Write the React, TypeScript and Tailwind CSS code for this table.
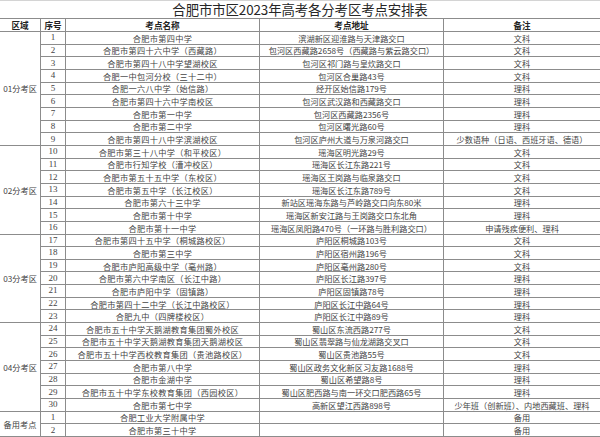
type Row = [string, string, string, string];

type Group = {
  name: string;
  span: string;
  rows: Row[];
};

const groups: Group[] = [
  {
    name: "01分考区",
    span: "row-span-9",
    rows: [
      ["1", "合肥市第四中学", "滨湖新区迎淮路与天津路交口", "文科"],
      ["2", "合肥市第四十六中学（西藏路）", "包河区西藏路2658号（西藏路与紫云路交口）", "文科"],
      ["3", "合肥市第四十八中学望湖校区", "包河区祁门路与皇炊路交口", "文科"],
      ["4", "合肥一中包河分校（三十二中）", "包河区合巢路43号", "文科"],
      ["5", "合肥一六八中学（始信路）", "经开区始信路179号", "理科"],
      ["6", "合肥市第四十六中学南校区", "包河区武汉路和西藏路交口", "理科"],
      ["7", "合肥市第一中学", "包河区西藏路2356号", "理科"],
      ["8", "合肥市第二中学", "包河区曙光路60号", "理科"],
      ["9", "合肥市第四十八中学滨湖校区", "包河区庐州大道与万泉河路交口", "少数语种（日语、西班牙语、德语）"],
    ],
  },
  {
    name: "02分考区",
    span: "row-span-7",
    rows: [
      ["10", "合肥市第三十八中学（和平校区）", "瑶海区明光路29号", "文科"],
      ["11", "合肥市行知学校（漕冲校区）", "瑶海区长江东路221号", "文科"],
      ["12", "合肥市第五十五中学（东校区）", "瑶海区王岗路与临泉路交口", "文科"],
      ["13", "合肥市第五中学（长江校区）", "瑶海区长江东路789号", "文科"],
      ["14", "合肥市第六十三中学", "新站区瑶海东路与芦岭路交口向东80米", "理科"],
      ["15", "合肥市第十中学", "瑶海区新安江路与王岗路交口东北角", "理科"],
      ["16", "合肥市第十一中学", "瑶海区凤阳路470号（一环路与胜利路交口）", "申请残疾便利、理科"],
    ],
  },
  {
    name: "03分考区",
    span: "row-span-7",
    rows: [
      ["17", "合肥市第四十五中学（桐城路校区）", "庐阳区桐城路103号", "文科"],
      ["18", "合肥市第三中学", "庐阳区宿州路196号", "文科"],
      ["19", "合肥市庐阳高级中学（亳州路）", "庐阳区亳州路280号", "文科"],
      ["20", "合肥市第六中学南区（长江中路）", "庐阳区长江路397号", "理科"],
      ["21", "合肥市庐阳中学（固镇路）", "庐阳区固镇路78号", "理科"],
      ["22", "合肥市第四十二中学（长江中路校区）", "庐阳区长江中路64号", "理科"],
      ["23", "合肥九中（四牌楼校区）", "庐阳区长江中路89号", "理科"],
    ],
  },
  {
    name: "04分考区",
    span: "row-span-7",
    rows: [
      ["24", "合肥市五十中学天鹅湖教育集团蜀外校区", "蜀山区东流西路277号", "文科"],
      ["25", "合肥市五十中学天鹅湖教育集团天鹅湖校区", "蜀山区翡翠路与仙龙湖路交叉口", "文科"],
      ["26", "合肥市五十中学西校教育集团（贵池路校区）", "蜀山区贵池路55号", "文科"],
      ["27", "合肥市第八中学", "蜀山区政务文化新区习友路1688号", "理科"],
      ["28", "合肥市金湖中学", "蜀山区希望路8号", "理科"],
      ["29", "合肥市五十中学东校教育集团（西园校区）", "蜀山区肥西路与南一环交口肥西路65号", "理科"],
      ["30", "合肥市第七中学", "高新区望江西路898号", "少年班（创新班）、内地西藏班、理科"],
    ],
  },
  {
    name: "备用考点",
    span: "row-span-2",
    rows: [
      ["1", "合肥工业大学附属中学", "", "备用"],
      ["2", "合肥市第三十中学", "", "备用"],
    ],
  },
];

const cell =
  "flex items-center justify-center overflow-hidden whitespace-nowrap border-b border-[#8c8c8c] leading-none";

export default function App() {
  return (
    <div className="h-[437px] w-[600px] overflow-hidden bg-white font-['Noto_Sans_CJK_SC','Noto_Sans',sans-serif] text-[#444]">
      <div className="flex h-[18px] items-center justify-center border-t border-[#d4d4d4] text-[13.4px] leading-none tracking-[-0.1px] text-[#262626]">
        合肥市市区2023年高考各分考区考点安排表
      </div>

      <div className="grid grid-cols-[40px_25px_194px_184px_157px] grid-rows-[13px_repeat(32,12.66px)] border-t border-[#8c8c8c] text-[8.2px]">
        {/* header */}
        <div className={`${cell} text-[8.6px] font-bold text-[#222]`}>区域</div>
        <div className={`${cell} border-l text-[8.6px] font-bold text-[#222]`}>序号</div>
        <div className={`${cell} border-l text-[8.6px] font-bold text-[#222]`}>考点名称</div>
        <div className={`${cell} border-l text-[8.6px] font-bold text-[#222]`}>考点地址</div>
        <div className={`${cell} border-l text-[8.6px] font-bold text-[#222]`}>备注</div>

        {groups.map((g) => [
          <div key={g.name} className={`${cell} ${g.span}`}>
            {g.name}
          </div>,
          ...g.rows.flatMap((r) => [
            <div key={g.name + r[0] + "n"} className={`${cell} border-l font-['Liberation_Serif',serif] text-[9px]`}>
              {r[0]}
            </div>,
            <div key={g.name + r[0] + "s"} className={`${cell} border-l tracking-[0.3px]`}>
              {r[1]}
            </div>,
            <div key={g.name + r[0] + "a"} className={`${cell} border-l`}>
              {r[2]}
            </div>,
            <div key={g.name + r[0] + "m"} className={`${cell} border-l`}>
              {r[3]}
            </div>,
          ]),
        ])}
      </div>
    </div>
  );
}
